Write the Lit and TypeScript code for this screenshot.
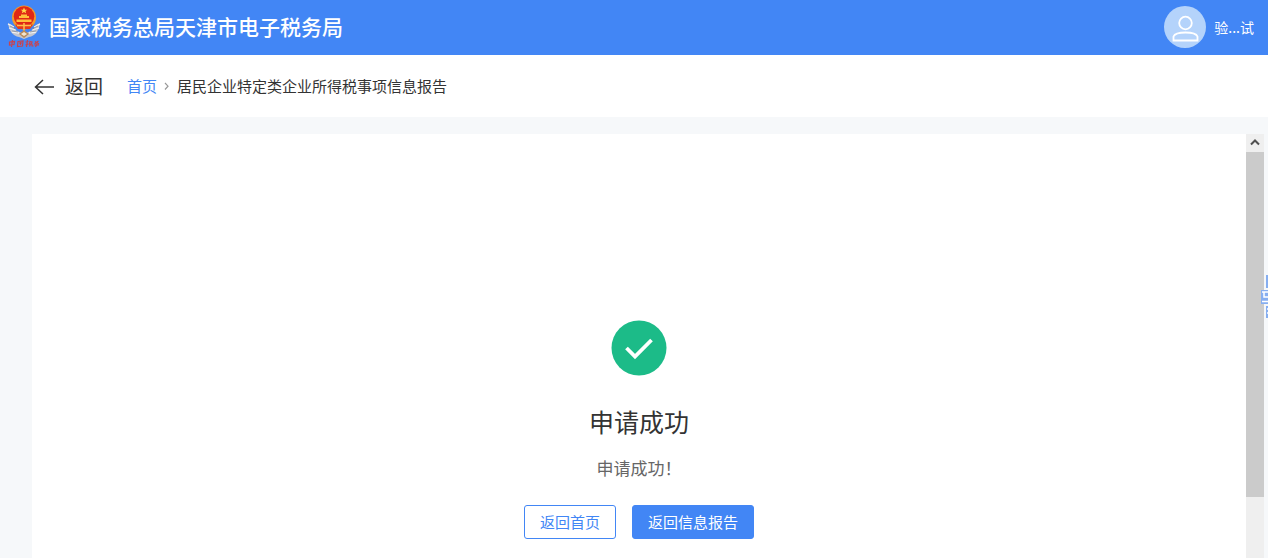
import { LitElement, html, css, svg } from "lit";
import { customElement } from "lit/decorators.js";

const emblem = svg`
  <path d="M1 18l4 2 3 5 9 4 9-4 3-5 4-2c-1 8-5 13-11 14l-5 2-5-2C6 31 2 26 1 18z" fill="#c3c6cf"/>
  <path d="M1 19l6 3M2 23l7 2M5 27l7 1M33 19l-6 3M32 23l-7 2M29 27l-7 1" stroke="#f1f1f1" stroke-width="1.300"/>
  <path d="M3 21l6 3M5 26l6 1M31 21l-6 3M29 26l-6 1" stroke="#858b98" stroke-width=".8"/>
  <circle cx="17" cy="12.500" r="12" fill="#f39a2b"/>
  <circle cx="17" cy="11.500" r="10.300" fill="#e02716"/>
  <path d="M17 2.500l1 2.200h2.300l-1.800 1.400.7 2.200-2.200-1.300-2.200 1.300.7-2.200-1.800-1.400H16z" fill="#ffd84a"/>
  <path d="M9.500 14.500h15v2.500h-15zM12 11h10v2H12zM14 9.500h6v1.500h-6z" fill="#ffbf3a"/>
  <path d="M8 19.500h18l-3 4.500H11z" fill="#e33b1c"/>
  <path d="M10 20.500h14M17 18v9" stroke="#ffc04a" stroke-width="1.500"/>
  <path d="M12 29l5-4 5 4-5 4z" fill="#b98a5a"/>
  <path d="M14 29l3-2 3 2-3 2z" fill="#f3e6d0"/>
  <g fill="none" stroke="#c8434f" stroke-width="1.200">
    <path d="M2.500 37l5-.5-.5 3-4.500.5zM5.500 35l-1 7M11 36.500l5-.5-.5 5-5 .5zM12 38h3M13.500 37v3M18.500 37l3-.5M20.500 35l-1 7M18.500 40l3-1M23 36.500l2 .5-.5 2h-2zM23.500 39l-1 2.500M25 39v2h1.500M28 36.500l4 2.500M31.500 36l-4 3M27.500 40h4.500M30 39l-1.500 3"/>
  </g>`;

@customElement("app-root")
export class AppRoot extends LitElement {
  static styles = css`
    :host {
      display: flex;
      flex-direction: column;
      position: relative;
      height: 100vh;
      overflow: hidden;
      background: #f6f8fa;
      color: #333;
      font-family: "Noto Sans CJK SC", "Noto Sans", sans-serif;
      font-size: 15px;
      line-height: 24px;
    }
    * { box-sizing: border-box; }
    svg { display: block; flex: none; }
    a { color: inherit; text-decoration: none; }
    button { font: inherit; cursor: pointer; }
    h1, h2, p { margin: 0; font-weight: 400; }
    .top {
      display: flex;
      align-items: center;
      flex: none;
      height: 55px;
      padding: 0 14px 2px 7px;
      background: #4286f5;
      color: #fff;
    }
    .brand { display: flex; align-items: center; gap: 8px; }
    .brand h1 { font-size: 21px; line-height: 32px; padding-bottom: 2px; font-weight: 500; }
    .user {
      display: flex;
      align-items: center;
      gap: 8px;
      margin-left: auto;
      padding: 0;
      border: 0;
      background: none;
      color: inherit;
      font-size: 14px;
    }
    .crumbs {
      display: flex;
      align-items: center;
      flex: none;
      height: 62px;
      padding: 0 32px;
      background: #fff;
    }
    .back {
      display: flex;
      align-items: center;
      gap: 9px;
      margin-right: 24px;
      font-size: 19px;
      line-height: 28px;
    }
    .home { color: #4286f5; }
    .sep { margin: 0 7px; }
    .body {
      display: flex;
      flex: 1;
      min-height: 0;
      padding: 17px 4px 0 32px;
    }
    .result {
      display: flex;
      flex: 1;
      flex-direction: column;
      align-items: center;
      padding-top: 186px;
      background: #fff;
    }
    .result h2 { margin-top: 27px; font-size: 25px; line-height: 36px; }
    .result p { margin-top: 17px; font-size: 17px; line-height: 24px; color: #666; }
    .actions { display: flex; gap: 16px; margin-top: 25px; }
    .btn {
      height: 34px;
      padding: 0 15px;
      border: 1px solid #4286f5;
      border-radius: 3px;
      background: #fff;
      color: #4286f5;
    }
    .primary { background: #4286f5; color: #fff; }
    .scroll { display: flex; flex-direction: column; width: 18px; background: #efefef; }
    .up {
      display: grid;
      place-items: center;
      height: 18px;
      padding: 0;
      border: 0;
      background: #efefef;
    }
    .thumb { height: 85%; max-height: 345px; background: #cbcbcb; }
    .float {
      position: absolute;
      right: 0;
      top: 274px;
    }
  `;

  render() {
    return html`
      <header class="top">
        <div class="brand">
          <svg width="34" height="44" viewBox="0 0 34 44" aria-hidden="true">${emblem}</svg>
          <h1>国家税务总局天津市电子税务局</h1>
        </div>
        <button class="user">
          <svg width="42" height="42" viewBox="0 0 42 42" aria-hidden="true">
            <circle cx="21" cy="21" r="21" fill="#b4d3fb"/>
            <g fill="none" stroke="#fff" stroke-width="1.800">
              <circle cx="21.500" cy="17" r="6.300"/>
              <path d="M9.500 34.500v-4c1-2.500 6-4 12-4s11 1.500 12 4v4z"/>
            </g>
          </svg>
          <span>验...试</span>
        </button>
      </header>
      <nav class="crumbs">
        <a class="back" href="#">
          <svg width="24" height="20" viewBox="0 0 24 20" fill="none" stroke="#333" stroke-width="1.500" aria-hidden="true">
            <path d="M22 11H4M11 4l-7.500 7 7.500 7"/>
          </svg>
          <span>返回</span>
        </a>
        <a class="home" href="#">首页</a>
        <svg class="sep" width="6" height="10" viewBox="0 0 6 10" fill="none" stroke="#999" stroke-width="1.200" aria-hidden="true">
          <path d="M1 2l3 3.200L1 8.500"/>
        </svg>
        <span>居民企业特定类企业所得税事项信息报告</span>
      </nav>
      <main class="body">
        <section class="result">
          <svg width="56" height="56" viewBox="0 0 56 56" aria-hidden="true">
            <circle cx="28" cy="28" r="27.500" fill="#1cbb88"/>
            <path d="M15.500 28l8.500 8.500L40.500 20" fill="none" stroke="#fff" stroke-width="3.800"/>
          </svg>
          <h2>申请成功</h2>
          <p>申请成功！</p>
          <div class="actions">
            <button class="btn">返回首页</button>
            <button class="btn primary">返回信息报告</button>
          </div>
        </section>
        <div class="scroll">
          <button class="up" aria-label="向上滚动">
            <svg width="10" height="8" viewBox="0 0 10 8" fill="none" stroke="#505050" stroke-width="2" aria-hidden="true">
              <path d="M1 5.500l4-4 4 4"/>
            </svg>
          </button>
          <div class="thumb"></div>
        </div>
      </main>
      <svg class="float" width="7" height="46" viewBox="0 0 7 46" aria-hidden="true">
        <path d="M7 1H5v13h2zM0 16h7v14H0zM7 32H5v12h2z" fill="#86aef0"/>
        <path d="M1 18h6M3 18v5h4M1 27.500h6M6 35h1M6 39h1" fill="none" stroke="#fff" stroke-width="1.500"/>
      </svg>
    `;
  }
}
